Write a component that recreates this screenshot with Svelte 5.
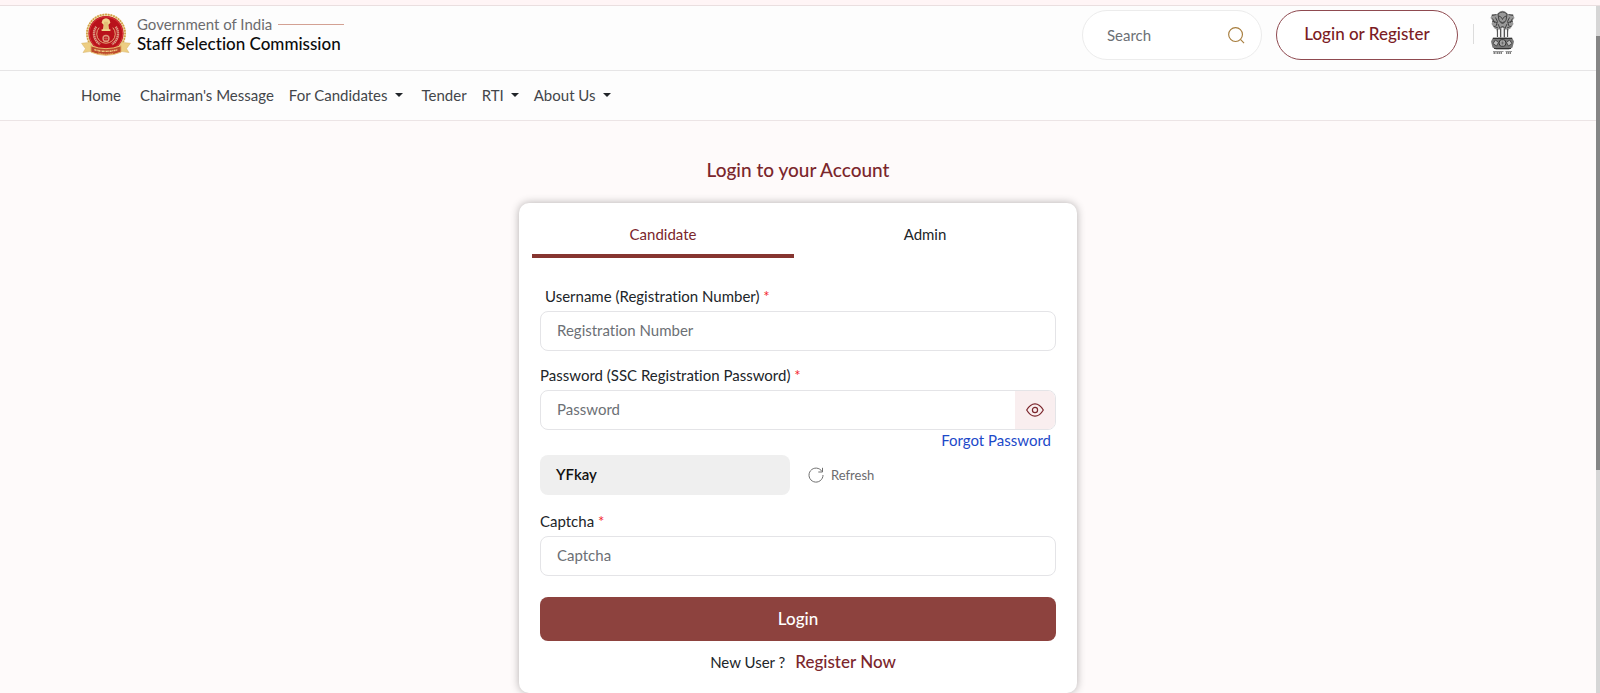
<script>
	const links = [
		{ label: "Home" },
		{ label: "Chairman's Message" },
		{ label: "For Candidates", menu: true },
		{ label: "Tender" },
		{ label: "RTI", menu: true },
		{ label: "About Us", menu: true }
	];
	const tabs = ["Candidate", "Admin"];
	const rays = Array.from({ length: 44 }, (_, i) => i * 360 / 44);

	let active = $state("Candidate");
	let search = $state("");
	let username = $state("");
	let password = $state("");
	let captcha = $state("");
	let showPassword = $state(false);
</script>

<div class="page">
	<header>
		<div class="top">
			<a class="brand" href="#home">
				<svg class="seal" viewBox="0 0 102 88" aria-hidden="true">
					<circle cx="51" cy="42" r="41" fill="#f3dfae" />
					{#each rays as angle}
						<circle cx="51" cy="3" r="2" fill="#cf9d48" transform="rotate({angle} 51 42)" />
					{/each}
					<circle cx="51" cy="42" r="36" fill="#b9121b" />
					<circle cx="51" cy="42" r="34" fill="none" stroke="#d8373b" stroke-width="2" />
					<path d="M31 28a25 25 0 0 0 8 36M71 28a25 25 0 0 1-8 36" fill="none" stroke="#dd9a83" stroke-width="5" stroke-dasharray="3 1" />
					<path d="M37 30a19 19 0 1 0 28 0" fill="none" stroke="#e5ae7b" stroke-width="2" />
					<path d="M44 14q7-7 14 0l2 6-4 4 1 9h3v4H42v-4h3l1-9-4-4z" fill="#f0d48c" />
					<path d="M49 18v15M53 18v15" stroke="#b78634" stroke-width="1" />
					<circle cx="51" cy="52" r="6" fill="none" stroke="#df967b" stroke-width="3" />
					<path d="M46 52h10M51 47v10" stroke="#df967b" />
					<path d="M1 62l19-2 4 18-20 3 5-8zM101 62l-19-2-4 18 20 3-5-8z" fill="#edce83" stroke="#d5b062" />
					<path d="M20 67q31 12 62 0v13q-31 13-62 0z" fill="#bd4a2c" stroke="#e8c373" stroke-width="2" />
					<path d="M27 75q24 7 48 0" fill="none" stroke="#f0cb83" stroke-width="3" stroke-dasharray="4 1 2 1" />
					<path d="M35 82q16 5 32 0" fill="none" stroke="#e6b870" stroke-width="2" stroke-dasharray="3 1" />
				</svg>
				<span class="names">
					<span class="gov">Government of India</span>
					<span class="ssc">Staff Selection Commission</span>
				</span>
			</a>
			<div class="actions">
				<label class="search">
					<input type="text" placeholder="Search" aria-label="Search" bind:value={search} />
					<svg viewBox="0 0 18 18" aria-hidden="true">
						<circle cx="8" cy="8" r="7.3" />
						<path d="M13.4 13.4l3.6 3.6" />
					</svg>
				</label>
				<button class="account" type="button">Login or Register</button>
				<span class="divider"></span>
				<svg class="emblem" viewBox="0 0 50 88" aria-hidden="true">
					<path d="M16 6q9-9 18 0l3 3 9-1 3 8-4 5 2 7-6 9-4 2-3 16H16l-3-16-4-2-6-9 2-7-4-5 3-8 9 1z" fill="#999" />
					<path d="M16 8q9-8 18 0l-2 13q-7 8-14 0zM4 11l9-2M46 11l-9-2M4 22l10 3M46 22l-10 3M7 32l9 4M43 32l-9 4" fill="none" stroke="#444" stroke-width="2" />
					<path d="M18 12l5 3 2 4 2-4 5-3M20 23l5 5 5-5M11 15l4 8-3 9M39 15l-4 8 3 9M16 28l4 9 5-5 5 5 4-9M5 17l5 9M45 17l-5 9" fill="none" stroke="#444" stroke-width="2" />
					<path d="M15 38v16M21 38v17M29 38v17M35 38v16" stroke="#555" stroke-width="2.5" />
					<path d="M18 39v15M25 36v19M32 39v15" stroke="#f4f4f4" stroke-width="4" />
					<path d="M6 55h38l4 8-3 12-7 4H12l-7-4-3-12z" fill="#777" />
					<circle cx="25" cy="66" r="7" fill="#bbb" stroke="#333" stroke-width="2" />
					<path d="M18 66h14M25 59v14M20 61l10 10M20 71l10-10" stroke="#555" />
					<path d="M6 67l5-7 6 5-4 7zM44 67l-5-7-6 5 4 7z" fill="#bbb" stroke="#333" stroke-width="1.5" />
					<path d="M6 57h38M8 77h34" stroke="#333" stroke-width="2" />
					<path d="M6 83h21M31 83h13" stroke="#333" />
					<path d="M7 86h18M32 86h11" stroke="#555" stroke-width="3" stroke-dasharray="3 1 2 1" />
				</svg>
			</div>
		</div>
		<nav>
			{#each links as link}
				{#if link.menu}
					<button class="menu" type="button" aria-haspopup="true">{link.label}<span class="caret"></span></button>
				{:else}
					<a href="#{link.label}">{link.label}</a>
				{/if}
			{/each}
		</nav>
	</header>

	<main>
		<h1>Login to your Account</h1>
		<section class="card">
			<div class="tabs" role="tablist">
				{#each tabs as tab}
					<button
						type="button"
						role="tab"
						class:active={active === tab}
						aria-selected={active === tab}
						onclick={() => active = tab}>{tab}</button>
				{/each}
			</div>
			<form onsubmit={(e) => e.preventDefault()}>
				<label class="indent" for="username">Username (Registration Number) <span class="req">*</span></label>
				<input class="field" id="username" type="text" placeholder="Registration Number" bind:value={username} />

				<label for="password">Password (SSC Registration Password) <span class="req">*</span></label>
				<div class="field group">
					<input id="password" type={showPassword ? "text" : "password"} placeholder="Password" bind:value={password} />
					<button class="eye" type="button" aria-label="Show password" onclick={() => showPassword = !showPassword}>
						<svg viewBox="0 0 18 14" aria-hidden="true">
							<path d="M.7 7C3 3 5.7.8 9 .8S15 3 17.3 7C15 11 12.3 13.2 9 13.2S3 11 .7 7z" />
							<circle cx="9" cy="7" r="2.6" />
						</svg>
					</button>
				</div>
				<a class="forgot" href="#forgot">Forgot Password</a>

				<div class="challenge">
					<output class="code">YFkay</output>
					<button class="refresh" type="button">
						<svg viewBox="0 0 16 16" aria-hidden="true">
							<path d="M14 4.5A7 7 0 1 0 15 8M14.5.8V5h-4.2" />
						</svg>
						Refresh
					</button>
				</div>

				<label for="captcha">Captcha <span class="req">*</span></label>
				<input class="field" id="captcha" type="text" placeholder="Captcha" bind:value={captcha} />

				<button class="submit" type="submit">Login</button>
				<p>New User ? <a href="#register">Register Now</a></p>
			</form>
		</section>
	</main>
	<div class="scrollbar"><span></span></div>
</div>

<style>
	:global(body) {
		background: #fefafa;
		overflow: hidden;
	}

	.page {
		position: relative;
		height: 100vh;
		overflow: hidden;
		border-top: 5px solid #fff5f6;
		box-sizing: border-box;
		color: #212529;
		font: 15px/20px Lato, "Open Sans", sans-serif;
		font-variant-ligatures: none;
	}

	.page * {
		box-sizing: border-box;
	}

	button,
	input {
		font: inherit;
		font-variant-ligatures: none;
		color: inherit;
		border: none;
		background: none;
		margin: 0;
		padding: 0;
	}

	button {
		cursor: pointer;
	}

	a {
		color: inherit;
		text-decoration: none;
	}

	input {
		min-width: 0;
		outline: none;
	}

	input::placeholder {
		color: #6c7075;
		opacity: 1;
	}

	header {
		background: #fdfdfd;
		border-top: 1px solid #eadfe0;
		border-bottom: 1px solid #ece4e5;
	}

	.top {
		display: flex;
		justify-content: space-between;
		padding: 4px 85px 10px 81px;
		border-bottom: 1px solid #e6e5e6;
	}

	.brand {
		display: flex;
		align-items: flex-start;
		gap: 6px;
		padding-top: 3px;
	}

	.seal {
		width: 50px;
		height: 43px;
	}

	.names {
		display: flex;
		flex-direction: column;
		padding-top: 1px;
	}

	.gov {
		display: flex;
		align-items: center;
		gap: 6px;
		color: #6c6c6e;
	}

	.gov::after {
		content: "";
		width: 66px;
		height: 1px;
		background: #d3a193;
	}

	.ssc {
		color: #0c0c0c;
		font-size: 17px;
		font-weight: 500;
	}

	.actions {
		display: flex;
		align-items: flex-start;
	}

	.search {
		display: flex;
		align-items: center;
		width: 180px;
		height: 50px;
		padding: 0 16px 0 24px;
		border: 1px solid #ececec;
		border-radius: 25px;
		background: #fff;
	}

	.search input {
		flex: 1;
	}

	.search svg {
		width: 17px;
		height: 17px;
		fill: none;
		stroke: #a67c3c;
		stroke-width: 1.2;
	}

	.account {
		width: 182px;
		height: 50px;
		margin-left: 14px;
		padding-bottom: 2px;
		border: 1px solid #8f4a50;
		border-radius: 25px;
		background: #fff;
		color: #7b1c24;
		font-size: 17px;
		font-weight: 500;
	}

	.divider {
		width: 1px;
		height: 20px;
		margin: 14px 16px 0 15px;
		background: #dcdcdc;
	}

	.emblem {
		width: 25px;
		height: 44px;
	}

	nav {
		display: flex;
		align-items: center;
		gap: 15px;
		height: 49px;
		padding: 0 81px 2px;
		color: #43464a;
	}

	nav a:not(:first-child) {
		margin-left: 4px;
	}

	.menu {
		display: flex;
		align-items: center;
		gap: 7px;
	}

	.caret {
		border: 4px solid transparent;
		border-top-color: #212529;
		border-bottom: none;
	}

	main {
		display: flex;
		flex-direction: column;
		align-items: center;
		padding-right: 4px;
	}

	h1 {
		margin: 37px 0 21px;
		color: #7b262c;
		font-size: 19px;
		line-height: 24px;
		font-weight: 500;
	}

	.card {
		width: 558px;
		padding: 12px 21px 21px;
		border-radius: 10px;
		background: #fff;
		box-shadow: 0 0 8px rgba(0, 0, 0, 0.3);
	}

	.tabs {
		display: flex;
		margin-left: -8px;
	}

	.tabs button {
		flex: 1;
		height: 43px;
		padding-bottom: 2px;
		border-bottom: 4px solid transparent;
	}

	.tabs .active {
		border-color: #863530;
		border-radius: 4px 4px 0 0;
		color: #7b262c;
	}

	form {
		display: flex;
		flex-direction: column;
		padding-top: 28px;
	}

	label:not(.search) {
		margin-bottom: 5px;
	}

	.indent {
		padding-left: 5px;
	}

	.req {
		color: #f3262d;
	}

	.field {
		height: 40px;
		margin-bottom: 14px;
		padding: 0 16px 2px;
		border: 1px solid #e4e4e7;
		border-radius: 8px;
		background: #fff;
	}

	.group {
		display: flex;
		margin-bottom: 0;
		padding-right: 0;
		padding-bottom: 0;
		overflow: hidden;
	}

	.group input {
		flex: 1;
		padding-bottom: 2px;
	}

	.eye {
		display: grid;
		place-items: center;
		width: 40px;
		background: #f9eeef;
	}

	.eye svg {
		width: 18px;
		height: 16px;
		fill: none;
		stroke: #7b262c;
		stroke-width: 1.2;
	}

	.forgot {
		align-self: flex-end;
		margin-right: 5px;
		color: #1c49c9;
	}

	.challenge {
		display: flex;
		align-items: center;
		gap: 18px;
		margin: 5px 0 16px;
	}

	.code {
		width: 250px;
		height: 40px;
		padding: 0 16px;
		border-radius: 8px;
		background: #efefef;
		color: #111;
		font-weight: 600;
		line-height: 38px;
	}

	.refresh {
		display: flex;
		align-items: center;
		gap: 7px;
		color: #6b6b6e;
		font-size: 13px;
	}

	.refresh svg {
		width: 16px;
		height: 16px;
		fill: none;
		stroke: #707070;
	}

	.submit {
		height: 44px;
		margin-top: 7px;
		border-radius: 8px;
		background: #8d423e;
		color: #fff;
		font-size: 17px;
		font-weight: 500;
	}

	p {
		display: flex;
		justify-content: center;
		align-items: center;
		gap: 10px;
		margin: 11px 0 0;
		padding-left: 10px;
	}

	p a {
		color: #7b262c;
		font-size: 17px;
		font-weight: 500;
	}

	.scrollbar {
		position: absolute;
		top: 1px;
		right: 0;
		bottom: 0;
		width: 4px;
		padding-top: 30px;
		background: #d6d6d6;
	}

	.scrollbar span {
		display: block;
		height: 66%;
		background: #858585;
	}
</style>
